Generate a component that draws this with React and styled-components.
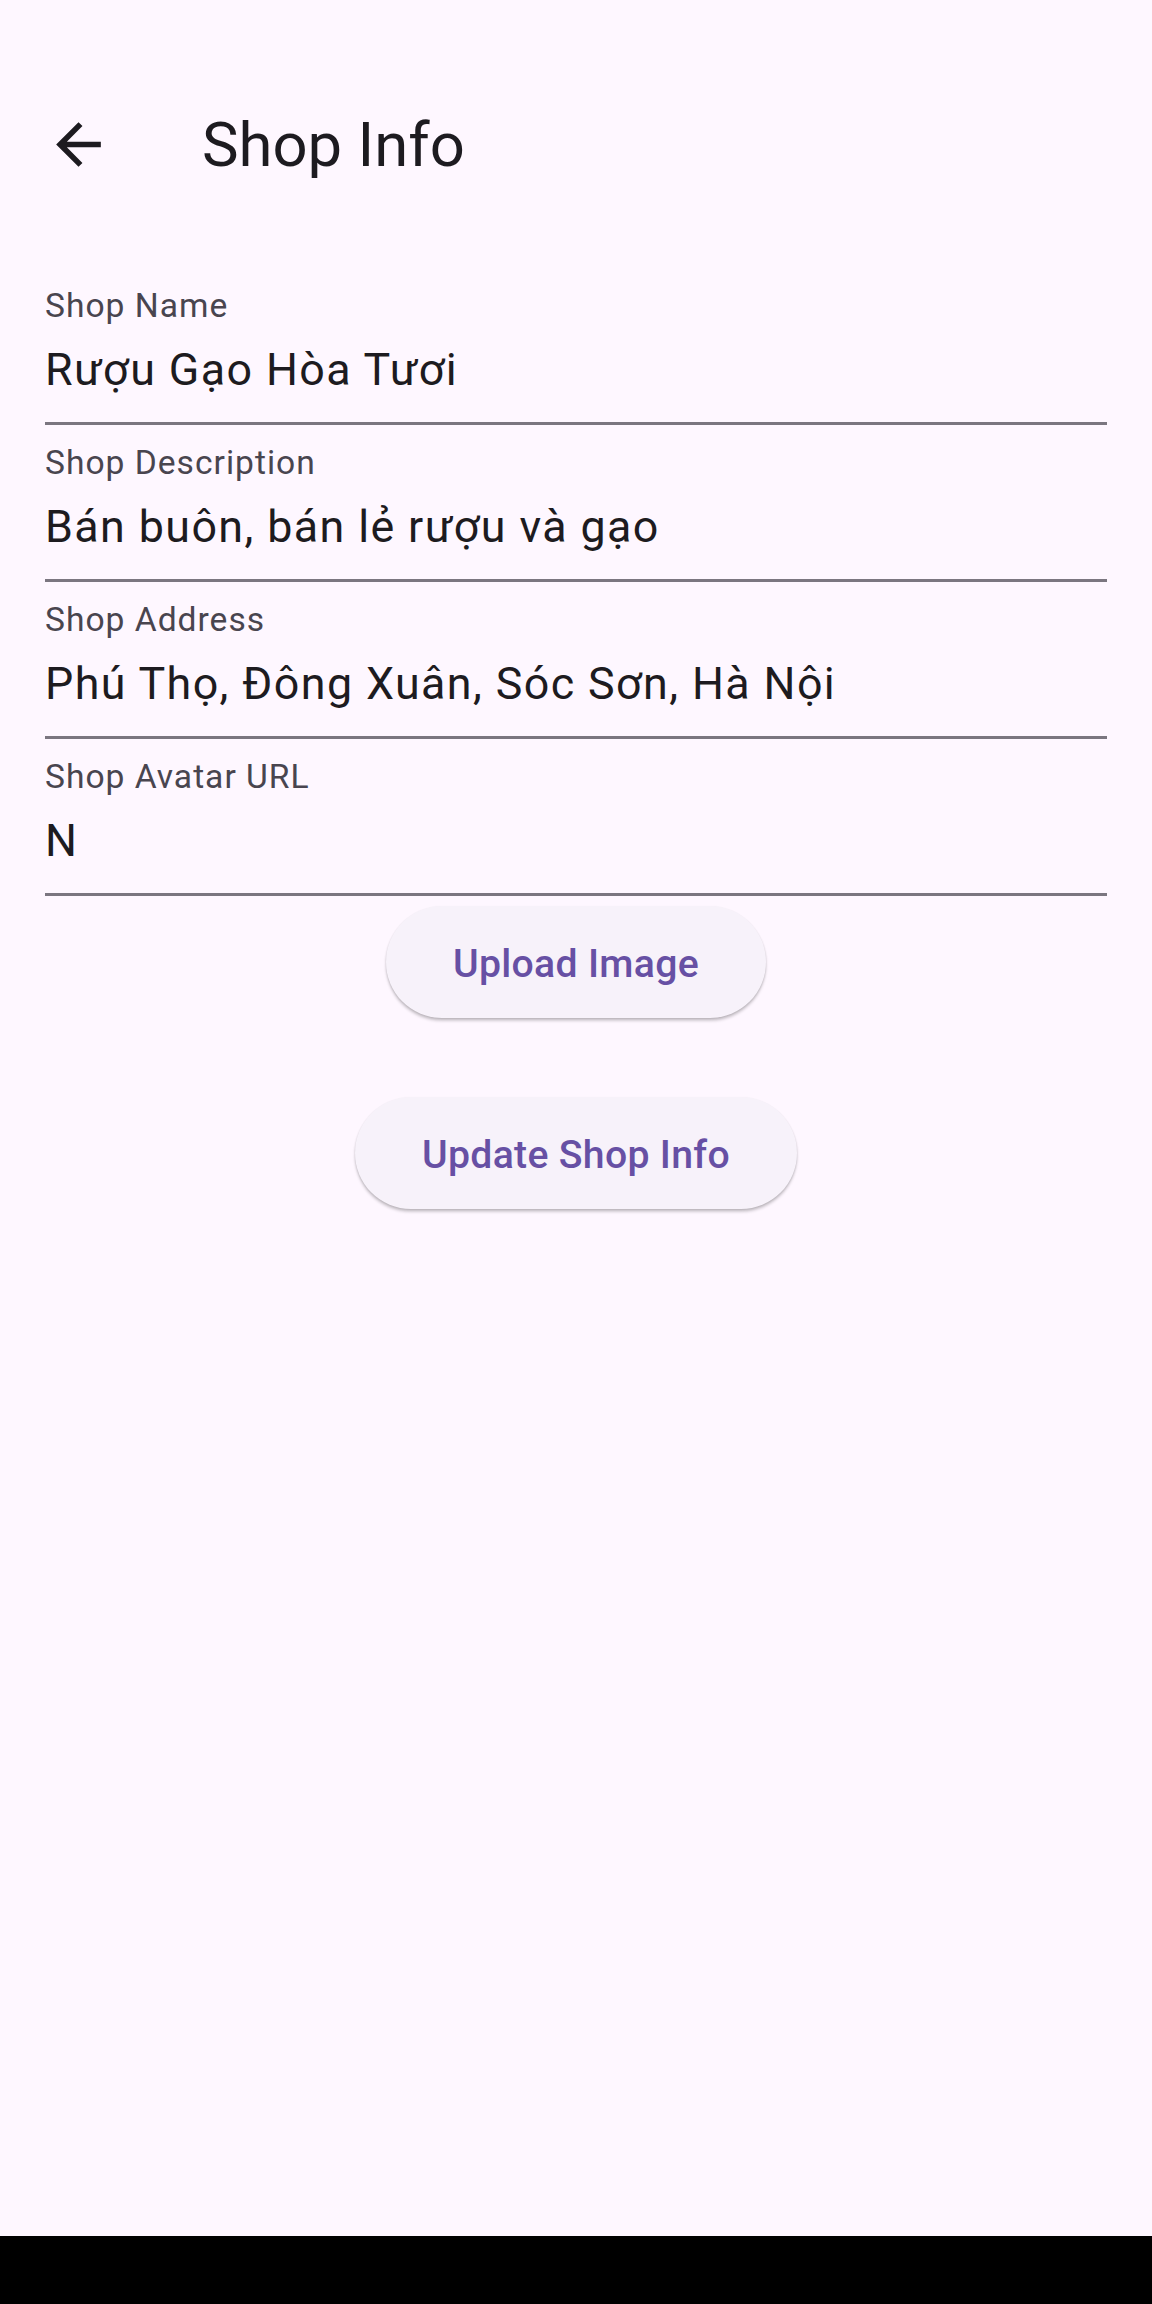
import React from 'react'
import styled, { createGlobalStyle } from 'styled-components'

const GlobalStyle = createGlobalStyle`
  html, body {
    margin: 0;
    padding: 0;
    background: #fef7ff;
  }
  body {
    font-family: Roboto, "Noto Sans", "Liberation Sans", sans-serif;
    -webkit-font-smoothing: antialiased;
  }
`;

const Screen = styled.div`
  display: flex;
  flex-direction: column;
  width: 1152px;
  height: 2304px;
  background: #fef7ff;
`;

const Content = styled.div`
  flex: 1;
  display: flex;
  flex-direction: column;
`;

const AppBar = styled.header`
  display: flex;
  align-items: center;
  height: 179px;
  margin-top: 55px;
`;

const BackButton = styled.button`
  display: flex;
  align-items: center;
  justify-content: center;
  width: 157px;
  height: 134px;
  padding: 0;
  border: none;
  background: transparent;
  color: #1d1b20;
  cursor: pointer;
`;

const Title = styled.h1`
  margin: 0 0 0 45px;
  font-size: 61.6px;
  line-height: 78px;
  font-weight: 400;
  color: #1d1b20;
`;

const Form = styled.form`
  display: flex;
  flex-direction: column;
  padding: 52px 45px 0;
`;

const Fields = styled.div`
  display: flex;
  flex-direction: column;
  gap: 18px;
`;

const Field = styled.label`
  display: flex;
  flex-direction: column;
  padding-bottom: 24px;
  border-bottom: 3px solid #7b7680;
`;

const Label = styled.span`
  font-size: 33.6px;
  line-height: 40px;
  letter-spacing: 1px;
  color: #49454f;
`;

const Value = styled.span`
  margin-top: 15px;
  font-size: 44.8px;
  line-height: 57px;
  letter-spacing: 1.4px;
  color: #1d1b20;
  white-space: nowrap;
`;

const ButtonRow = styled.div`
  display: flex;
  justify-content: center;
  margin-top: ${p => p.gap}px;
`;

const PillButton = styled.button`
  height: 112px;
  padding: 3px 67px 0;
  border: none;
  border-radius: 56px;
  background: #f7f2fa;
  color: #6750a4;
  font-family: Roboto, "Noto Sans", sans-serif;
  font-size: 39.2px;
  font-weight: 500;
  letter-spacing: 0.3px;
  box-shadow: 0 3px 3px rgba(0, 0, 0, 0.18), 0 1px 2px rgba(0, 0, 0, 0.12);
  cursor: pointer;
`;

const NavBar = styled.div`
  height: 68px;
  background: #000;
`;

const ArrowBack = () => (
  <svg width="67" height="67" viewBox="0 0 24 24" fill="currentColor">
    <path d="M20 11H7.83l5.59-5.59L12 4l-8 8 8 8 1.41-1.41L7.83 13H20v-2z" />
  </svg>
)

const fields = [
  { label: 'Shop Name', value: 'Rượu Gạo Hòa Tươi' },
  { label: 'Shop Description', value: 'Bán buôn, bán lẻ rượu và gạo' },
  { label: 'Shop Address', value: 'Phú Thọ, Đông Xuân, Sóc Sơn, Hà Nội' },
  { label: 'Shop Avatar URL', value: 'N' },
]

const App = () => (
  <Screen>
    <GlobalStyle />
    <Content>
      <AppBar>
        <BackButton type="button" aria-label="Back">
          <ArrowBack />
        </BackButton>
        <Title>Shop Info</Title>
      </AppBar>
      <Form onSubmit={e => e.preventDefault()}>
        <Fields>
          {fields.map(f => (
            <Field key={f.label}>
              <Label>{f.label}</Label>
              <Value>{f.value}</Value>
            </Field>
          ))}
        </Fields>
        <ButtonRow gap={10}>
          <PillButton type="button">Upload Image</PillButton>
        </ButtonRow>
        <ButtonRow gap={79}>
          <PillButton type="submit">Update Shop Info</PillButton>
        </ButtonRow>
      </Form>
    </Content>
    <NavBar />
  </Screen>
)

export default App
